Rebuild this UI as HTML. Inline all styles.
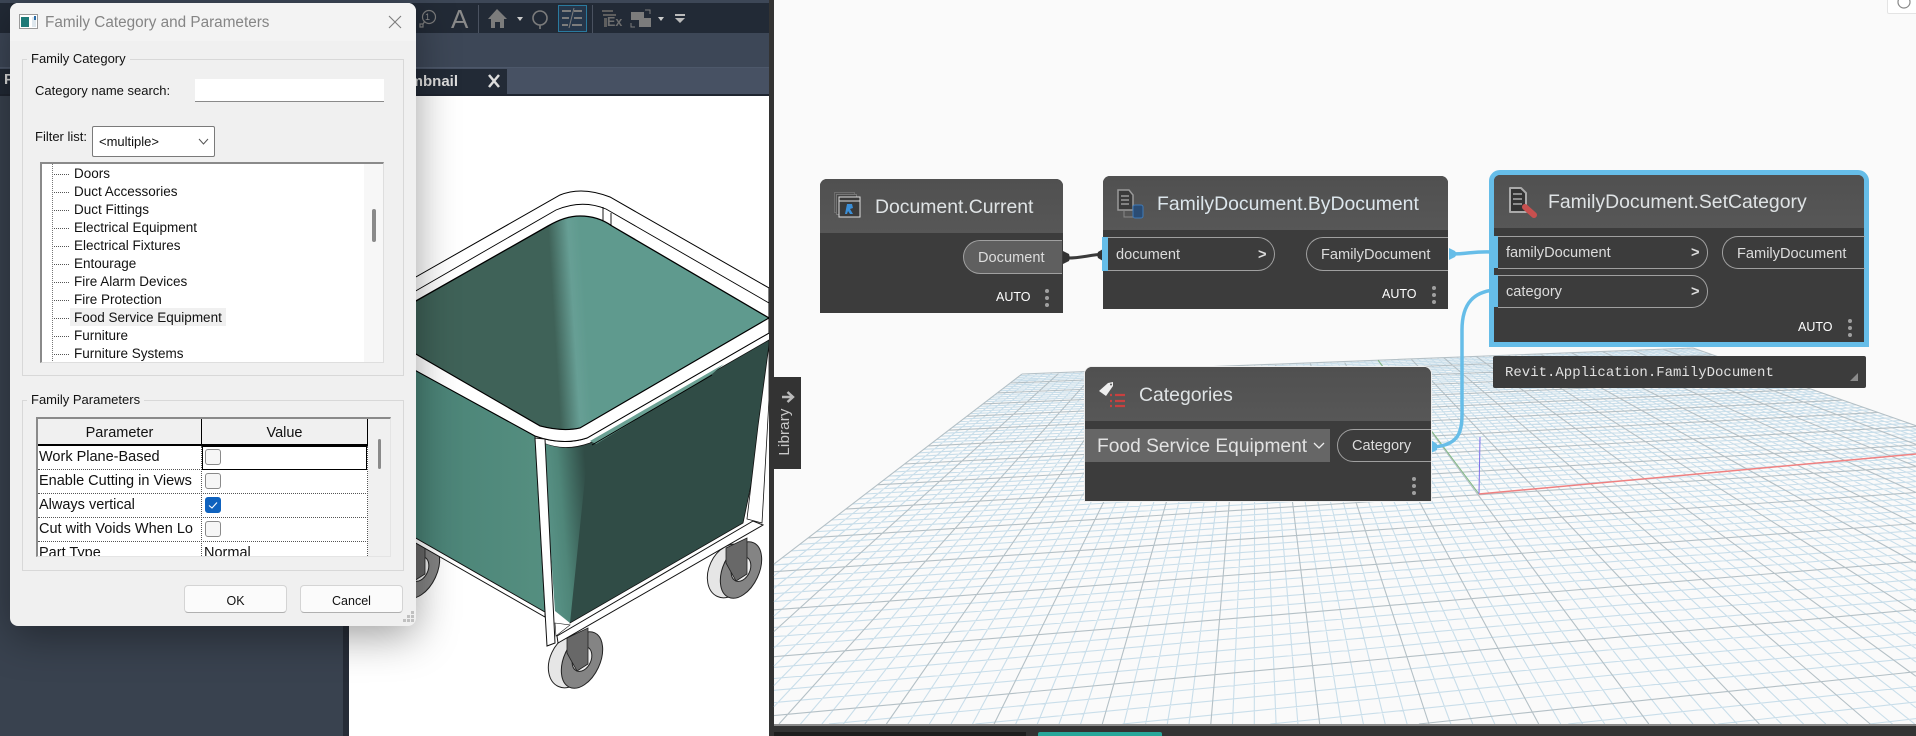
<!DOCTYPE html>
<html>
<head>
<meta charset="utf-8">
<title>Family Category and Parameters</title>
<style>
html,body{margin:0;padding:0;background:#fafafa;overflow:hidden;width:1916px;height:736px}
#p{position:relative;width:1916px;height:736px;overflow:hidden;background:#fafafa;font-family:"Liberation Sans",sans-serif}
#p div,#p span{position:absolute;box-sizing:border-box}
#p svg{position:absolute;left:0;top:0}
.t{white-space:nowrap;line-height:20px;height:20px;color:#000}
.d{font-size:13px;color:#111}
.tr{font-size:13.5px;color:#111}
.rw{font-size:14.5px;color:#111}
.nt{font-size:19.4px;color:#dfe3e5;line-height:24px;height:24px}
.pl{font-size:14.6px;color:#dcdcdc}
.au{font-size:12.5px;color:#fff;font-weight:normal}
.dot{width:4px;height:4px;border-radius:2px;background:#a0a0a0}
.cb{width:16px;height:16px;border:1px solid #8a8a8a;border-radius:3px;background:#f6f6f6}
.h{height:0;border-top:1px dotted #555}
.v{width:0;border-left:1px dotted #555}
</style>
</head>
<body>
<div id="p">
  <!-- Revit side -->
  <div style="left:0;top:0;width:769px;height:3px;background:#3d4757"></div>
  <div style="left:0;top:3px;width:769px;height:30px;background:#222a36"></div>
  <div style="left:0;top:33px;width:769px;height:35px;background:#3d4757"></div>
  <div style="left:0;top:67px;width:769px;height:1px;background:#4d586a"></div>
  <div style="left:0;top:68px;width:769px;height:26px;background:#475163"></div>
  <div style="left:0;top:94px;width:769px;height:2px;background:#1f2530"></div>
  <div style="left:0;top:69px;width:12px;height:25px;background:#222a36"></div>
  <div class="t" style="left:4px;top:70px;color:#ddd;font-weight:bold;font-size:15px">P</div>
  <div style="left:0;top:96px;width:343px;height:640px;background:#39424f"></div>
  <div style="left:343px;top:96px;width:6px;height:640px;background:#262c37"></div>
  <div style="left:349px;top:96px;width:420px;height:640px;background:#fff"></div>
  <div style="left:769px;top:0;width:5px;height:736px;background:#333"></div>
  <!-- document tab -->
  <div style="left:340px;top:69px;width:167px;height:25px;background:#222a36"></div>
  <div class="t" style="left:416px;top:72px;color:#ddd;font-weight:bold;font-size:15px;width:42px;overflow:hidden;direction:rtl">mbnail</div>

  <svg width="1916" height="736" viewBox="0 0 1916 736" xmlns="http://www.w3.org/2000/svg">
    <defs>
      <clipPath id="vp"><rect x="349" y="96" width="420" height="640"/></clipPath>
      <linearGradient id="inn" gradientUnits="userSpaceOnUse" x1="554" y1="320" x2="586" y2="318">
        <stop offset="0" stop-color="#3f6258"/><stop offset=".62" stop-color="#679f95"/><stop offset="1" stop-color="#5f9a8e"/>
      </linearGradient>
      <linearGradient id="lf" gradientUnits="userSpaceOnUse" x1="416" y1="0" x2="545" y2="0">
        <stop offset="0" stop-color="#4a8276"/><stop offset="1" stop-color="#558f80"/>
      </linearGradient>
      <linearGradient id="cb" gradientUnits="userSpaceOnUse" x1="545" y1="520" x2="590" y2="516">
        <stop offset="0" stop-color="#5a9488"/><stop offset=".4" stop-color="#4f8679"/><stop offset="1" stop-color="#304c46"/>
      </linearGradient>
      <g id="wh">
        <ellipse cx="570" cy="661" rx="20" ry="28" transform="rotate(25 570 661)" fill="#e6e6e6" stroke="#222" stroke-width="1"/>
        <ellipse cx="582" cy="660" rx="18" ry="30" transform="rotate(25 582 660)" fill="#848484" stroke="#222" stroke-width="1"/>
        <ellipse cx="582" cy="659" rx="9" ry="13" transform="rotate(25 582 659)" fill="#eee" stroke="#222" stroke-width="1"/>
        <polygon points="567,638 588,628 588,664 577,671 567,653" fill="#686868" stroke="#222" stroke-width=".8"/>
      </g>
    </defs>

    <!-- 3D grid -->
    <g fill="none">
      <path id="gmin" stroke="#c9deea" stroke-width="1.1"/>
      <path id="gmaj" stroke="#b4c0c6" stroke-width="1.1"/>
      <line x1="1479" y1="494" x2="1378" y2="360" stroke="#7fb87f" stroke-width="1"/>
      <line x1="1479" y1="494" x2="1480" y2="437" stroke="#7f6fe8" stroke-width="1"/>
      <line x1="1479" y1="494" x2="1916" y2="454" stroke="#f08080" stroke-width="1.5"/>
    </g>

    <!-- Model -->
    <g clip-path="url(#vp)">
      <use href="#wh" transform="translate(-163,-90)"/>
      <use href="#wh" transform="translate(159,-90)"/>
      <polygon points="400,529 545,612 545,617 400,534" fill="#fff" stroke="#111" stroke-width="1"/>
      <polygon points="400,362 535,436 545,612 400,529" fill="url(#lf)" stroke="#111" stroke-width=".8"/>
      <path d="M543,443 Q565,452 590,443 L769,340 L769,399 L743,523 L570,623 Z" fill="#304c46" stroke="#111" stroke-width=".8"/>
      <path d="M543,443 Q565,452 590,445 L587,459 L570,623 L555,611 Z" fill="url(#cb)"/>
      <path d="M400,286 L560,195 Q582,186 610,197 L769,288 L769,333 L587,438 Q563,446 535,436 L400,362 Z" fill="#fff" stroke="#000" stroke-width="1"/>
      <path d="M400,310 L548,226 Q565,216 580,216 Q598,216 612,226 L769,318 L580,428 Q563,432 540,426 L400,345 Z" fill="url(#inn)" stroke="#000" stroke-width="1.3"/>
      <path d="M400,300 L556,210 Q582,199 606,209 L769,303" fill="none" stroke="#000" stroke-width=".9"/>
      <path d="M603,207 L603,221 M611,213 L611,226" stroke="#000" stroke-width=".9"/>
      <path d="M400,345 L540,426 Q563,432 580,428 L769,318 L769,333 L587,438 Q563,446 535,436 L400,362 Z" fill="#fff" stroke="#000" stroke-width="1"/>
      <path d="M590,441 L724,364 L712,374 L596,444 Z" fill="#6aa093"/>
      <path d="M592,445 L712,375" fill="none" stroke="#000" stroke-width=".9"/>
      <polygon points="747,519 758,426 769,345 769,400 762,523" fill="#fff" stroke="#111" stroke-width=".8"/>
      <polygon points="535,438 545,439 555,643 547,646" fill="#fff" stroke="#111" stroke-width="1"/>
      <polygon points="555,623 570,625 556,636" fill="#fff" stroke="#111" stroke-width=".6"/>
      <use href="#wh"/>
      <polygon points="557,636 753,521 763,525 558,643" fill="#fff" stroke="#111" stroke-width="1"/>
    </g>

    <!-- Wires -->
    <path d="M1068,258 C1082,258 1088,255 1105,254" fill="none" stroke="#3a3a3a" stroke-width="3"/>
    <path d="M1063,251 L1069,254 L1070,258 L1069,261 L1063,264Z" fill="#333"/>
    <path d="M1103,249 L1098,252 L1097,255 L1098,258 L1103,261Z" fill="#333"/>
    <path d="M1452,254 C1468,254 1474,251 1493,252" fill="none" stroke="#66bde8" stroke-width="3.5"/>
    <path d="M1449,248 L1455,251 L1457,254 L1455,257 L1449,260Z" fill="#66bde8"/>
    <path d="M1433,447 C1465,445 1462,425 1462,400 L1462,330 C1462,302 1475,292 1494,290" fill="none" stroke="#66bde8" stroke-width="3.5"/>
    <path d="M1431,440 L1431,453 L1437,450 L1437,444Z" fill="#66bde8"/>

    <!-- Toolbar icons -->
    <g fill="none" stroke="#7c7c7c">
      <circle cx="429" cy="17" r="6.5" stroke-width="1.2"/>
      <path d="M425,21 L423,24 M420,24 h3 v3 h-3z" stroke-width="1.2"/>
      <line x1="478.5" y1="5" x2="478.5" y2="33" stroke="#4a5260"/>
      <line x1="592.5" y1="5" x2="592.5" y2="33" stroke="#4a5260"/>
      <circle cx="540" cy="18" r="7" stroke-width="1.6"/>
      <line x1="540" y1="25" x2="540" y2="29" stroke-width="1.6"/>
    </g>
    <g fill="#7c7c7c">
      <path d="M488,19 L497,9 L507,19 L504,19 L504,28 L500,28 L500,22 L495,22 L495,28 L491,28 L491,19Z"/>
      <path d="M517,17 h6 l-3,4z M658,17 h6 l-3,4z" fill="#ccc"/>
      <path d="M675,14 h10 v2 h-10z M675,18 h10 l-5,5z" fill="#bbb"/>
      <rect x="602" y="10" width="11" height="2" fill="#5e5e5e"/>
      <rect x="603" y="14" width="13" height="2" fill="#5e5e5e"/>
      <rect x="604" y="18" width="3" height="9" fill="#5e5e5e"/>
      <rect x="631" y="12" width="13" height="8"/>
      <rect x="639" y="18" width="12" height="9"/>
      <path d="M631,23 v4 h4 M645,10 h5 v4" fill="none" stroke="#7c7c7c"/>
    </g>
    <rect x="558.5" y="5.5" width="28" height="26" fill="#26364a" stroke="#2a7a9f" stroke-width="1"/>
    <g stroke="#7c7c7c" stroke-width="2" fill="none">
      <path d="M562,11 h9 M574,11 h8 M562,18 h7 M574,18 h8 M562,25 h6 M572,25 h10"/>
      <path d="M574,8 L569,28" stroke-width="1"/>
    </g>
    <path d="M489,75 L499,87 M499,75 L489,87" stroke="#ddd" stroke-width="2.5" fill="none"/>
  </svg>
  <div class="t" style="left:451px;top:6px;height:26px;line-height:26px;font-size:26px;color:#8a8a8a">A</div>
  <div class="t" style="left:607px;top:12px;font-size:12.5px;font-weight:bold;color:#6e6e6e">Ex</div>
  <div class="t" style="left:425px;top:7px;font-size:9px;color:#8a8a8a">1</div>

  <!-- Dynamo nodes -->
  <div style="left:820px;top:179px;width:243px;height:134px;background:#3c3c3c;border-radius:7px 7px 0 0;overflow:hidden">
    <div style="left:0;top:0;width:243px;height:54px;background:linear-gradient(#505050,#575757)"></div>
  </div>
  <div class="t nt" style="left:875px;top:195px">Document.Current</div>
  <div style="left:963px;top:240px;width:99px;height:34px;background:#5f5f5f;border:1px solid #a0a0a0;border-right:0;border-radius:17px 0 0 17px"></div>
  <div class="t pl" style="left:978px;top:248px;color:#ddd">Document</div>
  <div class="t au" style="left:996px;top:287px">AUTO</div>
  <div class="dot" style="left:1045px;top:289px"></div><div class="dot" style="left:1045px;top:296px"></div><div class="dot" style="left:1045px;top:303px"></div>

  <div style="left:1103px;top:176px;width:345px;height:133px;background:#3c3c3c;border-radius:7px 7px 0 0;overflow:hidden">
    <div style="left:0;top:0;width:345px;height:54px;background:linear-gradient(#505050,#575757)"></div>
  </div>
  <div class="t nt" style="left:1157px;top:192px;color:#dce6ec">FamilyDocument.ByDocument</div>
  <div style="left:1102px;top:237px;width:6px;height:34px;background:#66bde8"></div>
  <div style="left:1108px;top:237px;width:167px;height:34px;border:1px solid #a0a0a0;border-left:0;border-radius:0 17px 17px 0"></div>
  <div class="t pl" style="left:1116px;top:245px">document</div>
  <div class="t pl" style="left:1258px;top:245px;font-weight:bold">&gt;</div>
  <div style="left:1306px;top:237px;width:142px;height:34px;border:1px solid #a0a0a0;border-right:0;border-radius:17px 0 0 17px"></div>
  <div class="t pl" style="left:1321px;top:245px">FamilyDocument</div>
  <div class="t au" style="left:1382px;top:284px">AUTO</div>
  <div class="dot" style="left:1432px;top:286px"></div><div class="dot" style="left:1432px;top:293px"></div><div class="dot" style="left:1432px;top:300px"></div>

  <div style="left:1489px;top:170px;width:380px;height:177px;border:5px solid #66bde8;border-radius:11px 11px 0 0;background:#3c3c3c;overflow:hidden">
    <div style="left:0;top:0;width:370px;height:53px;background:linear-gradient(#505050,#575757)"></div>
  </div>
  <div class="t nt" style="left:1548px;top:190px">FamilyDocument.SetCategory</div>
  <div style="left:1494px;top:236px;width:4px;height:32px;background:#66bde8"></div>
  <div style="left:1494px;top:275px;width:4px;height:32px;background:#66bde8"></div>
  <div style="left:1498px;top:236px;width:210px;height:33px;border:1px solid #a0a0a0;border-left:0;border-radius:0 16px 16px 0"></div>
  <div style="left:1498px;top:275px;width:210px;height:33px;border:1px solid #a0a0a0;border-left:0;border-radius:0 16px 16px 0"></div>
  <div class="t pl" style="left:1506px;top:243px">familyDocument</div>
  <div class="t pl" style="left:1506px;top:282px">category</div>
  <div class="t pl" style="left:1691px;top:243px;font-weight:bold">&gt;</div>
  <div class="t pl" style="left:1691px;top:282px;font-weight:bold">&gt;</div>
  <div style="left:1722px;top:236px;width:143px;height:33px;border:1px solid #a0a0a0;border-right:0;border-radius:16px 0 0 16px"></div>
  <div class="t pl" style="left:1737px;top:244px">FamilyDocument</div>
  <div class="t au" style="left:1798px;top:317px">AUTO</div>
  <div class="dot" style="left:1848px;top:319px"></div><div class="dot" style="left:1848px;top:326px"></div><div class="dot" style="left:1848px;top:333px"></div>

  <div style="left:1493px;top:356px;width:373px;height:32px;background:#3c3c3c;border-radius:2px"></div>
  <div class="t" style="left:1505px;top:363px;font-family:'Liberation Mono',monospace;font-size:14px;color:#e0e0e0">Revit.Application.FamilyDocument</div>

  <div style="left:1084px;top:366px;width:348px;height:136px;background:#3c3c3c;border:1px solid #eee;border-radius:8px 8px 0 0;overflow:hidden">
    <div style="left:0;top:0;width:346px;height:54px;background:linear-gradient(#505050,#575757)"></div>
    <div style="left:0;top:62px;width:245px;height:33px;background:#666"></div>
    <div style="left:252px;top:62px;width:110px;height:33px;border:1px solid #a0a0a0;border-radius:17px 0 0 17px"></div>
  </div>
  <div class="t nt" style="left:1139px;top:383px">Categories</div>
  <div class="t" style="left:1097px;top:435px;font-size:19.2px;line-height:24px;height:24px;color:#e2e2e2">Food Service Equipment</div>
  <div class="t pl" style="left:1352px;top:436px">Category</div>
  <div class="dot" style="left:1412px;top:477px"></div><div class="dot" style="left:1412px;top:484px"></div><div class="dot" style="left:1412px;top:491px"></div>

  <!-- Node icons (above nodes) -->
  <svg width="1916" height="736" viewBox="0 0 1916 736" xmlns="http://www.w3.org/2000/svg">
    <rect x="834.5" y="192.5" width="20" height="20" fill="none" stroke="#6e6e6e" stroke-width="1"/>
    <rect x="836.5" y="194.5" width="20" height="20" fill="#464646" stroke="#777" stroke-width="1"/>
    <rect x="839" y="197" width="21" height="20" fill="#3a3a3a" stroke="#ddd" stroke-width="1"/>
    <line x1="839" y1="201" x2="860" y2="201" stroke="#ddd"/>
    <path d="M845,214 L847,204 L852,204 L853,208 L850,209 L853,214 L850,214 L848,211 L847,214Z" fill="#3b8fd8"/>

    <path d="M1118,190 h11 l4,5 v15 h-15z" fill="#3a3a3a" stroke="#999" stroke-width="1.5"/>
    <path d="M1121,196 h8 M1121,200 h8 M1121,204 h8" stroke="#999" stroke-width="1.5"/>
    <path d="M1124,210 v7 h9" fill="none" stroke="#888" stroke-width="1"/>
    <rect x="1133" y="205" width="10" height="13" rx="2" fill="#2a4c74" stroke="#3f7ab8"/>

    <path d="M1510,188 h11 l5,5 v19 h-16z" fill="#333" stroke="#aaa" stroke-width="2" stroke-linejoin="round"/>
    <path d="M1513,194 h9 M1513,199 h9 M1513,204 h9" stroke="#aaa" stroke-width="1.6"/>
    <path d="M1525,207 L1534,215" stroke="#c8504f" stroke-width="6" stroke-linecap="round"/>

    <path d="M1099,391 L1108,383 L1113,382 L1113,386 L1106,396 Z" fill="#eee"/>
    <circle cx="1111" cy="384.5" r="1" fill="#555"/>
    <path d="M1110,395 h2 M1115,395 h10 M1110,401 h2 M1115,401 h10 M1110,406 h2 M1115,406 h10" stroke="#c8403f" stroke-width="2.2"/>
    <path d="M1314,443 L1319,448 L1324,443" fill="none" stroke="#eee" stroke-width="1.3"/>

    <path d="M1850,381 L1858,373 L1858,381Z" fill="#8a8a8a"/>
  </svg>

  <!-- Library tab -->
  <div style="left:774px;top:377px;width:27px;height:92px;background:#333"></div>
  <div class="t" style="left:745px;top:422px;width:80px;text-align:center;color:#c8c8c8;font-size:15px;transform:rotate(-90deg);letter-spacing:.2px">Library</div>
  <svg width="14" height="13" style="left:782px;top:391px"><path d="M0,6 H10 M5.5,1 L11,6 L5.5,11" fill="none" stroke="#bbb" stroke-width="2.4"/></svg>

  <!-- Top right widget -->
  <div style="left:1887px;top:-4px;width:40px;height:18px;background:#fff;border:1px solid #e4e4e4;border-radius:2px"></div>
  <svg width="24" height="14" style="left:1892px;top:0"><circle cx="12" cy="2" r="6" fill="none" stroke="#888" stroke-width="1.2"/></svg>

  <!-- Bottom bar -->
  <div style="left:774px;top:724px;width:1142px;height:2px;background:#8a8a8a"></div>
  <div style="left:774px;top:726px;width:1142px;height:10px;background:#333"></div>
  <div style="left:774px;top:732px;width:252px;height:4px;background:#1e1e1e"></div>
  <div style="left:1038px;top:732px;width:124px;height:4px;background:#27a79a;border-radius:2px 2px 0 0"></div>

  <!-- Dialog -->
  <div style="left:10px;top:3px;width:406px;height:623px;background:#f0f0f0;border-radius:8px;box-shadow:0 10px 42px rgba(0,0,0,.38);overflow:hidden">
    <div style="left:0;top:0;width:406px;height:38px;background:#f3f3f3"></div>
  </div>
  <svg width="22" height="18" style="left:19px;top:14px"><rect x="0.5" y="0.5" width="18" height="14" fill="#fff" stroke="#9a9a9a"/><rect x="2" y="3" width="8" height="10" fill="#1e7a78"/><rect x="13" y="3" width="4" height="10" fill="#dfe8ee"/><rect x="15" y="2" width="2" height="4" fill="#2a6ca8"/></svg>
  <div class="t" style="left:45px;top:13px;font-size:15.3px;color:#858585">Family Category and Parameters</div>
  <svg width="16" height="16" style="left:388px;top:15px"><path d="M1,1 L13,13 M13,1 L1,13" stroke="#7d7d7d" stroke-width="1.1" fill="none"/></svg>

  <div style="left:22px;top:59px;width:382px;height:317px;border:1px solid #d8d8d8"></div>
  <div class="t d" style="left:27px;top:49px;padding:0 4px;background:#f0f0f0">Family Category</div>
  <div class="t d" style="left:35px;top:81px">Category name search:</div>
  <div style="left:195px;top:79px;width:189px;height:23px;background:#fff;border-bottom:1px solid #8a8a8a"></div>
  <div class="t d" style="left:35px;top:127px">Filter list:</div>
  <div style="left:92px;top:126px;width:123px;height:31px;background:#fff;border:1px solid #7a7a7a;border-radius:2px"></div>
  <div class="t d" style="left:99px;top:132px">&lt;multiple&gt;</div>
  <svg width="12" height="8" style="left:198px;top:138px"><path d="M1,1 L5.5,6 L10,1" fill="none" stroke="#555" stroke-width="1"/></svg>

  <div style="left:40px;top:162px;width:344px;height:201px;background:#fff;border-top:2px solid #8a8a8a;border-left:2px solid #8a8a8a;border-bottom:1px solid #dedede;border-right:1px solid #dedede;overflow:hidden"></div>
  <div style="left:364px;top:164px;width:19px;height:198px;background:#f7f7f7"></div>
  <div style="left:372px;top:209px;width:4px;height:33px;background:#8a8a8a;border-radius:2px"></div>
  <div class="v" style="left:52px;top:164px;height:197px;border-left-color:#777"></div>
  <div style="left:70px;top:308px;width:156px;height:18px;background:#f0f0f0"></div>
  <div class="h" style="left:54px;top:174px;width:15px"></div>
  <div class="h" style="left:54px;top:192px;width:15px"></div>
  <div class="h" style="left:54px;top:210px;width:15px"></div>
  <div class="h" style="left:54px;top:228px;width:15px"></div>
  <div class="h" style="left:54px;top:246px;width:15px"></div>
  <div class="h" style="left:54px;top:264px;width:15px"></div>
  <div class="h" style="left:54px;top:282px;width:15px"></div>
  <div class="h" style="left:54px;top:300px;width:15px"></div>
  <div class="h" style="left:54px;top:318px;width:15px"></div>
  <div class="h" style="left:54px;top:336px;width:15px"></div>
  <div class="h" style="left:54px;top:354px;width:15px"></div>
  <div class="t tr" style="left:74px;top:164px">Doors</div>
  <div class="t tr" style="left:74px;top:182px">Duct Accessories</div>
  <div class="t tr" style="left:74px;top:200px">Duct Fittings</div>
  <div class="t tr" style="left:74px;top:218px">Electrical Equipment</div>
  <div class="t tr" style="left:74px;top:236px">Electrical Fixtures</div>
  <div class="t tr" style="left:74px;top:254px">Entourage</div>
  <div class="t tr" style="left:74px;top:272px">Fire Alarm Devices</div>
  <div class="t tr" style="left:74px;top:290px">Fire Protection</div>
  <div class="t tr" style="left:74px;top:308px">Food Service Equipment</div>
  <div class="t tr" style="left:74px;top:326px">Furniture</div>
  <div class="t tr" style="left:74px;top:344px">Furniture Systems</div>

  <div style="left:22px;top:400px;width:382px;height:171px;border:1px solid #d8d8d8"></div>
  <div class="t d" style="left:27px;top:390px;padding:0 4px;background:#f0f0f0">Family Parameters</div>

  <div style="left:36px;top:417px;width:355px;height:140px;background:#fff;border-top:2px solid #8a8a8a;border-left:2px solid #8a8a8a;border-bottom:1px solid #e4e4e4;border-right:1px solid #e4e4e4;overflow:hidden"></div>
  <div style="left:368px;top:419px;width:22px;height:137px;background:#f0f0f0"></div>
  <div style="left:378px;top:439px;width:3px;height:30px;background:#8a8a8a;border-radius:2px"></div>
  <div style="left:38px;top:419px;width:330px;height:27px;background:#f0f0f0;border-bottom:2px solid #000"></div>
  <div style="left:201px;top:419px;width:1px;height:27px;background:#000"></div>
  <div style="left:367px;top:419px;width:1px;height:27px;background:#000"></div>
  <div class="t rw" style="left:38px;top:423px;width:163px;text-align:center">Parameter</div>
  <div class="t rw" style="left:202px;top:423px;width:165px;text-align:center">Value</div>
  <div class="h" style="left:38px;top:469px;width:330px"></div>
  <div class="h" style="left:38px;top:493px;width:330px"></div>
  <div class="h" style="left:38px;top:517px;width:330px"></div>
  <div class="h" style="left:38px;top:541px;width:330px"></div>
  <div class="v" style="left:201px;top:446px;height:110px"></div>
  <div class="v" style="left:367px;top:446px;height:110px"></div>
  <div style="left:202px;top:446px;width:165px;height:24px;border:1px solid #000"></div>
  <div class="t rw" style="left:39px;top:447px">Work Plane-Based</div>
  <div class="t rw" style="left:39px;top:471px">Enable Cutting in Views</div>
  <div class="t rw" style="left:39px;top:495px">Always vertical</div>
  <div class="t rw" style="left:39px;top:519px">Cut with Voids When Lo</div>
  <div style="left:39px;top:543px;width:160px;height:13px;overflow:hidden"><span class="t rw" style="left:0;top:0">Part Type</span></div>
  <div style="left:204px;top:543px;width:160px;height:13px;overflow:hidden"><span class="t rw" style="left:0;top:0">Normal</span></div>
  <div class="cb" style="left:205px;top:449px"></div>
  <div class="cb" style="left:205px;top:473px"></div>
  <div class="cb" style="left:205px;top:497px;background:#0f62be;border-color:#0f62be"></div>
  <svg width="16" height="16" style="left:205px;top:497px"><path d="M4,8.5 L7,11 L12,5.5" fill="none" stroke="#fff" stroke-width="1.1"/></svg>
  <div class="cb" style="left:205px;top:521px"></div>

  <div style="left:184px;top:585px;width:103px;height:28px;background:#fbfbfb;border:1px solid #d4d4d4;border-bottom-color:#b0b0b0;border-radius:4px"></div>
  <div style="left:300px;top:585px;width:103px;height:28px;background:#fbfbfb;border:1px solid #d4d4d4;border-bottom-color:#b0b0b0;border-radius:4px"></div>
  <div class="t d" style="left:184px;top:591px;width:103px;text-align:center;font-size:12.5px">OK</div>
  <div class="t d" style="left:300px;top:591px;width:103px;text-align:center;font-size:12.5px">Cancel</div>
  <svg width="14" height="14" style="left:402px;top:610px"><g fill="#c0c0c0"><rect x="9" y="1" width="3" height="3"/><rect x="5" y="5" width="3" height="3"/><rect x="9" y="5" width="3" height="3"/><rect x="1" y="9" width="3" height="3"/><rect x="5" y="9" width="3" height="3"/><rect x="9" y="9" width="3" height="3"/></g></svg>

  <script>
  (function(){
    var a=888.7,b=-1201,c=1022,d=18.75,e=-187,f=374,g=.1286,h=-.957;
    function P(u,v){var w=g*u+h*v+1;return [(a*u+b*v+c)/w,(d*u+e*v+f)/w];}
    var X0=774,X1=1916,Y0=0,Y1=724;
    function seg(p,q){
      var t0=0,t1=1,dx=q[0]-p[0],dy=q[1]-p[1];
      var ps=[-dx,dx,-dy,dy],qs=[p[0]-X0,X1-p[0],p[1]-Y0,Y1-p[1]];
      for(var i=0;i<4;i++){
        if(ps[i]==0){if(qs[i]<0)return '';continue;}
        var r=qs[i]/ps[i];
        if(ps[i]<0){if(r>t1)return '';if(r>t0)t0=r;}
        else{if(r<t0)return '';if(r<t1)t1=r;}
      }
      return 'M'+(p[0]+t0*dx).toFixed(1)+','+(p[1]+t0*dy).toFixed(1)+'L'+(p[0]+t1*dx).toFixed(1)+','+(p[1]+t1*dy).toFixed(1);
    }
    var mn='',mj='',n=100,i,s,t;
    for(i=0;i<=n;i++){
      t=i/n;
      s=seg(P(0,t),P(1,t))+seg(P(t,0),P(t,1));
      if(i%5==0){mj+=s}else{mn+=s}
    }
    document.getElementById('gmin').setAttribute('d',mn);
    document.getElementById('gmaj').setAttribute('d',mj);
  })();
  </script>
</div>
</body>
</html>
